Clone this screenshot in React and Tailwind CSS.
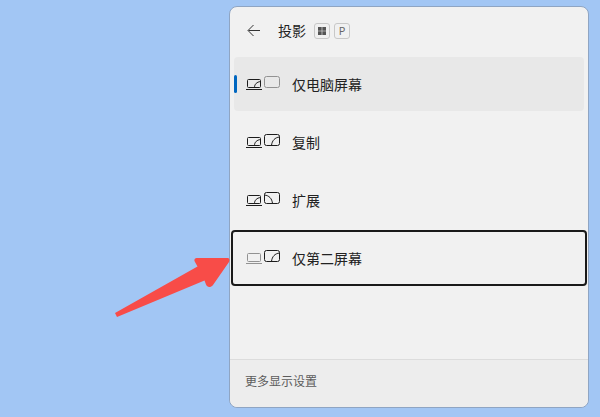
import { useState } from "react";

const MODES = [
    { id: "pc", label: "仅电脑屏幕" },
    { id: "duplicate", label: "复制" },
    { id: "extend", label: "扩展" },
    { id: "second", label: "仅第二屏幕" },
];

function ModeIcon({ mode }) {
    const laptopOff = mode === "second";
    const monitorOff = mode === "pc";

    return (
        <svg width="34" height="14" viewBox="0 0 34 14" fill="none" aria-hidden="true">
            <g stroke={laptopOff ? "#929292" : "#1c1c1c"}>
                <rect x="1.5" y="3.5" width="13" height="8" rx="1" />
                <path d="M0 13.5H16" />
                {!laptopOff && <path d="M14.5 5.500C11 6 8.500 8 8.500 11.5" />}
            </g>
            <g stroke={monitorOff ? "#929292" : "#1c1c1c"}>
                <rect x="18.5" y="0.5" width="15" height="11" rx="2" />
                {mode === "extend" && <path d="M18.5 3C23 3.5 26 6.5 26.5 11.5" />}
                {(mode === "duplicate" || mode === "second") && <path d="M33.5 3C29 3.5 26 6.5 25.5 11.5" />}
            </g>
        </svg>
    );
}

function Pointer() {
    return (
        <svg
            className="absolute right-full top-[26px] pointer-events-none"
            width="116"
            height="62"
            viewBox="0 0 116 62"
            aria-hidden="true"
        >
            <path
                fill="#f84c48"
                d="M0 57L82.500 10.500L80 6C78.500 3.500 80 2 82.500 2H112.500C114.500 2 115 4 114 6L98 29C95.500 32 92 31.500 91 28.500L89.500 24.500L2 61Z"
            />
        </svg>
    );
}

export default function App() {
    const [selected, setSelected] = useState("pc");
    const focused = "second";

    return (
        <div className="flex min-h-screen justify-end bg-[#a2c6f4] pt-1.5 pr-[11px] pb-[9px] font-['Noto_Sans_CJK_SC','Noto_Sans',sans-serif] text-[#222]">
            <section className="flex w-[360px] flex-col rounded-lg border border-[#8fa5c3] bg-[#f1f1f1]">
                <header className="flex h-[50px] items-center pb-0.5 pl-4">
                    <button type="button" aria-label="返回" className="mr-4">
                        <svg width="16" height="16" viewBox="0 0 16 16" fill="none" stroke="#333" aria-hidden="true">
                            <path d="M14 7.500H2.500M7.500 2L2 7.500L7.500 13" />
                        </svg>
                    </button>
                    <h1 className="pb-0.5 text-sm">投影</h1>
                    <kbd className="ml-2 flex size-4 items-center justify-center rounded-[3px] border border-[#c8c8c8]">
                        <svg width="8" height="8" viewBox="0 0 8 8" fill="#555" aria-label="Windows">
                            <path d="M0 0h3.700v3.700H0zM4.300 0H8v3.700H4.300zM0 4.300h3.700V8H0zM4.300 4.300H8V8H4.300z" />
                        </svg>
                    </kbd>
                    <kbd className="ml-1 flex size-4 items-center justify-center rounded-[3px] border border-[#c8c8c8] pb-px font-['Open_Sans',sans-serif] text-[11px] leading-none text-[#666]">
                        P
                    </kbd>
                </header>

                <ul className="flex flex-col gap-1 px-1">
                    {MODES.map(mode => (
                        <li
                            key={mode.id}
                            className={mode.id === focused ? "relative -mx-[3px] -my-px" : "relative"}
                        >
                            <button
                                type="button"
                                aria-pressed={selected === mode.id}
                                onClick={() => setSelected(mode.id)}
                                className={
                                    "flex w-full items-center text-left text-sm " +
                                    (mode.id === focused
                                        ? "h-14 rounded border-2 border-[#1a1a1a] pl-[13px] "
                                        : "h-[54px] rounded pl-3 ") +
                                    (selected === mode.id ? "bg-[#e8e8e8]" : "")
                                }
                            >
                                <span className="pb-0.5">
                                    <ModeIcon mode={mode.id} />
                                </span>
                                <span className="ml-3">{mode.label}</span>
                            </button>
                            {selected === mode.id && (
                                <span className="absolute top-[18px] left-0 h-[18px] w-[3px] rounded-full bg-[#0067c0]" />
                            )}
                            {mode.id === focused && <Pointer />}
                        </li>
                    ))}
                </ul>

                <footer className="mt-auto flex h-12 items-center rounded-b-lg border-t border-[#dcdcdc] bg-[#ededed] pb-1.5 pl-[15px]">
                    <a href="#display" className="text-xs text-[#5c5c5c]">更多显示设置</a>
                </footer>
            </section>
        </div>
    );
}
